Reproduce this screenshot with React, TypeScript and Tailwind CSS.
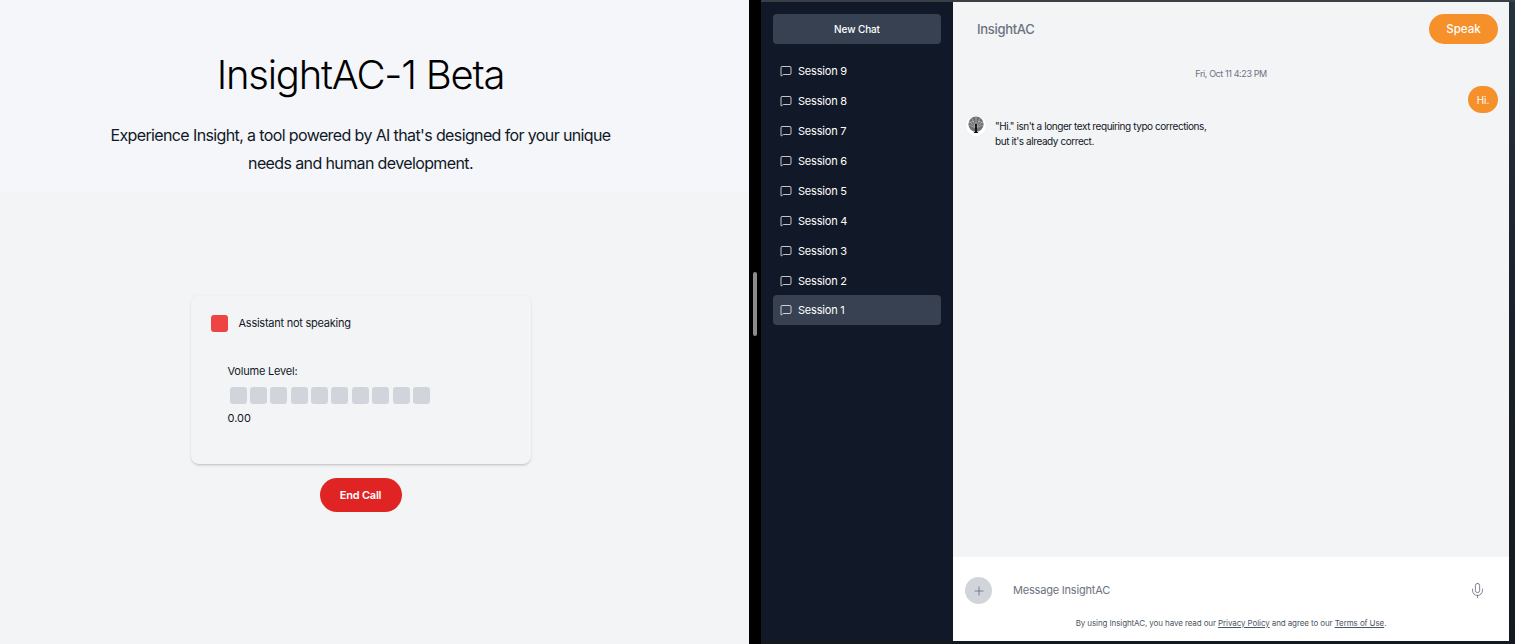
import { MessageSquare, Mic, Plus } from "lucide-react";

const sessions = [9, 8, 7, 6, 5, 4, 3, 2, 1];
const volumeBars = [0, 1, 2, 3, 4, 5, 6, 7, 8, 9];

// small tree logo used as the assistant avatar
const TreeLogo = () => (
  <svg viewBox="0 0 22 22" className="h-[22px] w-[22px] shrink-0">
    <circle cx="11" cy="11" r="10.7" fill="#ffffff" stroke="#e5e7eb" strokeWidth="0.5" />
    <circle cx="11" cy="9.2" r="7.6" fill="#707070" />
    <g stroke="#e9eaec" strokeWidth="0.4" fill="none">
      <path d="M11 13 L4.5 6.5 M11 13 L7 3.5 M11 13 L11 2 M11 13 L15 3.5 M11 13 L17.5 6.5 M11 13 L3.8 10 M11 13 L18.2 10 M3.8 8 L9 6 M18.2 8 L13 6" />
    </g>
    <path d="M10.1 9 h1.8 v7.5 l1.6 1.6 h-5 l1.6 -1.6 z" fill="#0b0b0b" />
  </svg>
);

export default function App() {
  return (
    <div className="flex h-[644px] w-[1515px] overflow-hidden bg-black font-['Inter',sans-serif] text-[#111827]">
      {/* Left panel */}
      <div className="flex w-[749px] flex-col bg-[#f3f4f6]">
        <header className="flex h-[191px] flex-col items-center bg-[#f4f6f9] pt-[50px] pr-[28px]">
          <h1 className="text-[40px] leading-[50px] font-light tracking-[-1.2px] text-black">InsightAC-1 Beta</h1>
          <p className="mt-[21px] w-[520px] text-center text-[16px] leading-[28px] tracking-[-0.62px]">
            Experience Insight, a tool powered by AI that's designed for your unique needs and human development.
          </p>
        </header>
        <div className="flex flex-col items-center pt-[105px] pr-[28px]">
          <div className="flex h-[168px] w-[340px] flex-col rounded-lg bg-[#f3f4f6] shadow-[0_2px_3px_-1px_rgba(0,0,0,0.22),0_0_3px_rgba(0,0,0,0.05)]">
            <div className="flex items-center gap-[11px] pt-[19px] pl-[20px]">
              <span className="h-[17px] w-[17px] rounded-[3px] bg-[#ef4444]" />
              <span className="text-[11px] leading-[17px] tracking-[-0.25px] text-[#111827]">Assistant not speaking</span>
            </div>
            <div className="pt-[31px] pl-[37px]">
              <div className="text-[11px] leading-[16px] tracking-[-0.2px]">Volume Level:</div>
              <div className="mt-[8px] flex gap-[3.4px] pl-[2px]">
                {volumeBars.map((b) => (
                  <span key={b} className="h-[17px] w-[17px] rounded-[3px] bg-[#d1d5db]" />
                ))}
              </div>
              <div className="mt-[6px] text-[11px] leading-[16px]">0.00</div>
            </div>
          </div>
          <button className="mt-[14px] h-[34px] w-[82px] rounded-full bg-[#e02424] text-[11px] font-semibold tracking-[-0.2px] text-white">
            End Call
          </button>
        </div>
      </div>

      {/* Divider with scroll handle */}
      <div className="flex w-[12px] flex-col items-center bg-black pt-[272px]">
        <div className="h-[64px] w-[4px] rounded-full bg-[#8c8c8c]" />
      </div>

      {/* Window */}
      <div className="flex w-[754px] flex-col bg-[linear-gradient(to_bottom,#27323f,#1a2029_50%,#14181f)]">
        <div className="h-[2px] bg-[#3a3f45]" />
        <div className="flex h-[639px] w-[748px]">
          {/* Sidebar */}
          <aside className="flex w-[192px] flex-col bg-[#111827] px-[12px] pt-[12px] text-white">
            <button className="h-[30px] rounded bg-[#374151] pt-[1px] text-[10px] font-medium tracking-[-0.1px]">New Chat</button>
            <nav className="mt-[12px] flex flex-col">
              {sessions.map((n) => (
                <div
                  key={n}
                  className={`flex h-[30px] items-center gap-[6px] rounded pl-[7px] text-[11px] tracking-[-0.2px] ${n === 1 ? "-mt-px bg-[#374151]" : ""}`}
                >
                  <MessageSquare className="h-[12px] w-[12px]" strokeWidth={1.5} />
                  <span>Session {n}</span>
                </div>
              ))}
            </nav>
          </aside>

          {/* Chat */}
          <main className="flex flex-1 flex-col bg-[#f3f4f6]">
            <div className="flex h-[555px] flex-col">
              <div className="flex items-center justify-between pt-[12px] pr-[11px] pl-[24px]">
                <span className="pt-[1px] text-[13px] font-medium tracking-[-0.3px] text-[#6b7280]">InsightAC</span>
                <button className="h-[30px] w-[69px] rounded-full bg-[#f6902a] pt-[1px] text-[11.5px] font-medium text-white">
                  Speak
                </button>
              </div>
              <div className="mt-[24px] text-center text-[9px] leading-[11px] tracking-[-0.4px] text-[#6b7280]">Fri, Oct 11 4:23 PM</div>
              <div className="mt-[7px] flex justify-end pr-[11px]">
                <div className="flex h-[27px] w-[30px] items-center justify-center rounded-full bg-[#f6902a] pt-[1px] text-[10px] text-white">
                  Hi.
                </div>
              </div>
              <div className="mt-[2px] flex gap-[8px] pl-[12px]">
                <TreeLogo />
                <p className="w-[240px] pt-[4px] text-[10px] leading-[15px] tracking-[-0.43px] text-[#111827]">
                  "Hi." isn't a longer text requiring typo corrections,
                  <br />
                  but it's already correct.
                </p>
              </div>
            </div>

            {/* Composer */}
            <div className="flex h-[84px] flex-col bg-white">
              <div className="flex items-center pt-[20px] pr-[23px] pl-[12px]">
                <div className="flex h-[27px] w-[27px] items-center justify-center rounded-full bg-[#d1d5db]">
                  <Plus className="h-[14px] w-[14px] text-[#6b7280]" strokeWidth={1.5} />
                </div>
                <span className="ml-[21px] flex-1 text-[11px] tracking-[-0.2px] text-[#6b7280]">Message InsightAC</span>
                <Mic className="h-[17px] w-[17px] text-[#6b7280]" strokeWidth={1.25} />
              </div>
              <p className="mt-[13px] text-center text-[8px] leading-[12px] tracking-[-0.1px] text-[#4b5563]">
                By using InsightAC, you have read our <span className="underline">Privacy Policy</span> and agree to our{" "}
                <span className="underline">Terms of Use</span>.
              </p>
            </div>
          </main>
        </div>
      </div>
    </div>
  );
}
